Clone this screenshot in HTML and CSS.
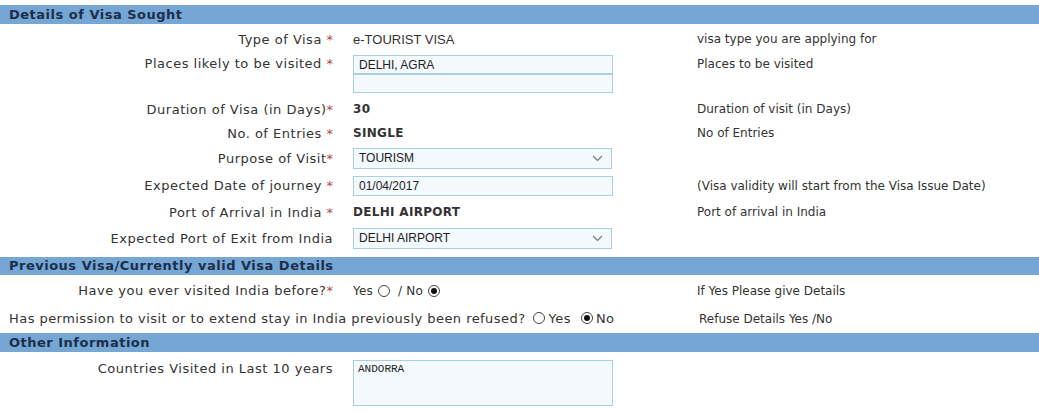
FILE: index.html
```html
<!DOCTYPE html>
<html>
<head>
<meta charset="utf-8">
<link rel="stylesheet" href="styles.css">
</head>
<body>
<div class="form">
  <div class="section-head">Details of Visa Sought</div>
  <div class="row r1">
    <div class="lbl">Type of Visa <span class="req">*</span></div>
    <div class="val plain">e-TOURIST VISA</div>
    <div class="help">visa type you are applying for</div>
  </div>
  <div class="row r2 top">
    <div class="lbl">Places likely to be visited <span class="req">*</span></div>
    <div class="val stack">
      <input class="field" type="text" value="DELHI, AGRA">
      <input class="field second" type="text" value="">
    </div>
    <div class="help">Places to be visited</div>
  </div>
  <div class="row r3">
    <div class="lbl">Duration of Visa (in Days)<span class="req">*</span></div>
    <div class="val bold">30</div>
    <div class="help">Duration of visit (in Days)</div>
  </div>
  <div class="row r4">
    <div class="lbl">No. of Entries <span class="req">*</span></div>
    <div class="val bold">SINGLE</div>
    <div class="help">No of Entries</div>
  </div>
  <div class="row r5">
    <div class="lbl">Purpose of Visit<span class="req">*</span></div>
    <div class="val"><div class="select">TOURISM<svg class="chev" width="11" height="7" viewBox="0 0 11 7"><path d="M1 1 L5.5 5.5 L10 1" fill="none" stroke="#777" stroke-width="1.2"/></svg></div></div>
    <div class="help"></div>
  </div>
  <div class="row r6">
    <div class="lbl">Expected Date of journey <span class="req">*</span></div>
    <div class="val"><input class="field" type="text" value="01/04/2017"></div>
    <div class="help">(Visa validity will start from the Visa Issue Date)</div>
  </div>
  <div class="row r7">
    <div class="lbl">Port of Arrival in India <span class="req">*</span></div>
    <div class="val bold">DELHI AIRPORT</div>
    <div class="help">Port of arrival in India</div>
  </div>
  <div class="row r8">
    <div class="lbl">Expected Port of Exit from India</div>
    <div class="val"><div class="select">DELHI AIRPORT<svg class="chev" width="11" height="7" viewBox="0 0 11 7"><path d="M1 1 L5.5 5.5 L10 1" fill="none" stroke="#777" stroke-width="1.2"/></svg></div></div>
    <div class="help"></div>
  </div>

  <div class="section-head h2">Previous Visa/Currently valid Visa Details</div>
  <div class="row r9">
    <div class="lbl">Have you ever visited India before?<span class="req">*</span></div>
    <div class="val radios small">Yes<span class="radio r-a"></span><span class="sep">/ No</span><span class="radio on r-b"></span></div>
    <div class="help">If Yes Please give Details</div>
  </div>
  <div class="row r10">
    <div class="wide">Has permission to visit or to extend stay in India previously been refused?<span class="radio r-c"></span>Yes<span class="radio on r-d"></span>No</div>
    <div class="help shift">Refuse Details Yes /No</div>
  </div>

  <div class="section-head h3">Other Information</div>
  <div class="row r11 top">
    <div class="lbl">Countries Visited in Last 10 years</div>
    <div class="val"><textarea class="area">ANDORRA</textarea></div>
    <div class="help"></div>
  </div>
</div>
</body>
</html>
```

FILE: styles.css
```css
html, body {
  margin: 0;
  padding: 0;
  background: #fff;
}
.form {
  padding-top: 5px;
  font-family: "DejaVu Sans", Verdana, sans-serif;
  font-size: 13px;
  color: #333;
}
.section-head {
  background: #75a6d4;
  color: #1b2e4b;
  font-weight: bold;
  font-size: 13px;
  letter-spacing: 0.5px;
  height: 19px;
  line-height: 19px;
  padding-left: 9px;
}
.section-head.h2 { margin-top: 5px; height: 18px; line-height: 18px; }
.section-head.h3 { margin-top: 2px; }
.row {
  display: grid;
  grid-template-columns: 336px 361px 1fr;
  align-items: center;
}
.row.top { align-items: start; }
.lbl {
  text-align: right;
  padding-right: 3px;
  white-space: nowrap;
  letter-spacing: 0.5px;
}
.req { color: #b04848; letter-spacing: 0; }
.val { padding-left: 17px; display: flex; align-items: center; }
.val.plain { font-family: "Liberation Sans", Arial, sans-serif; font-size: 13px; color: #333; }
.val.bold { font-weight: bold; font-size: 12px; color: #333; letter-spacing: 0.3px; }
.help { font-size: 12px; color: #333; white-space: nowrap; }
.r1 { height: 30px; }
.r2 { height: 43px; padding-top: 1px; box-sizing: border-box; }
.r2 .lbl { line-height: 16px; padding-top: 1px; }
.r2 .help { line-height: 16px; padding-top: 1px; }
.stack { flex-direction: column; align-items: flex-start; }
.field {
  box-sizing: border-box;
  width: 260px;
  height: 20px;
  border: 1px solid #a9d0de;
  background: #f3f9fc;
  font-family: "Liberation Sans", Arial, sans-serif;
  font-size: 12px;
  color: #222;
  padding: 0 5px;
  margin: 0;
  outline: none;
}
.field.second { height: 18px; border-top: 0; }
.r2 .stack .field:first-child { border-bottom: 2px solid #a9d0de; }
.r3 { height: 24px; }
.r4 { height: 24px; }
.r5 { height: 26px; }
.r6 { height: 29px; }
.r7 { height: 24px; }
.r8 { height: 28px; }
.select {
  box-sizing: border-box;
  width: 259px;
  height: 21px;
  border: 1px solid #a9d0de;
  background: #f3f9fc;
  font-family: "Liberation Sans", Arial, sans-serif;
  font-size: 12px;
  color: #222;
  padding: 0 5px;
  display: flex;
  align-items: center;
  justify-content: space-between;
}
.chev { margin-right: 3px; }
.r9 { height: 31px; }
.r10 { height: 25px; }
.radios.small { font-size: 12px; letter-spacing: 0.2px; }
.radio {
  display: inline-block;
  box-sizing: border-box;
  width: 12px;
  height: 12px;
  border: 1px solid #444;
  border-radius: 50%;
  background: #fff;
  vertical-align: -1px;
  position: relative;
}
.radio.on::after {
  content: "";
  position: absolute;
  left: 2px;
  top: 2px;
  width: 6px;
  height: 6px;
  border-radius: 50%;
  background: #111;
}
.r-a { margin: 0 0 0 5px; }
.sep { margin-left: 8px; margin-right: 5px; }
.r-b { margin: 0; }
.r-c { margin: 0 4px 0 7px; }
.r-d { margin: 0 3px 0 10px; }
.wide {
  grid-column: 1 / span 2;
  padding-left: 9px;
  white-space: nowrap;
  letter-spacing: 0.45px;
}
.help.shift { padding-left: 2px; }
.r11 { padding-top: 8px; }
.r11 .lbl { line-height: 16px; padding-top: 1px; }
.area {
  box-sizing: border-box;
  width: 260px;
  height: 46px;
  border: 1px solid #a9d0de;
  background: #f3f9fc;
  font-family: "Liberation Mono", "Courier New", monospace;
  font-size: 11px;
  color: #222;
  padding: 2px 4px;
  margin: 0;
  resize: none;
  outline: none;
}
```
